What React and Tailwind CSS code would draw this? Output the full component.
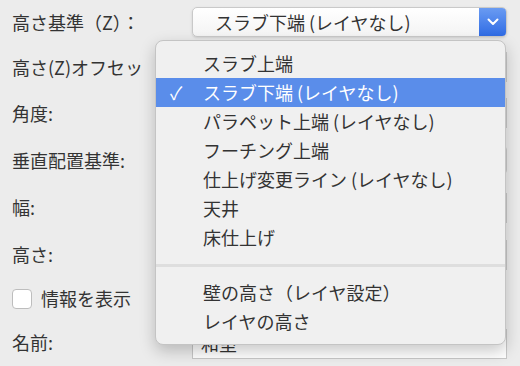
import React from "react";

const font = { fontFamily: '"Noto Sans CJK JP", "Noto Sans", sans-serif' };

const items = [
  "スラブ上端",
  "スラブ下端 (レイヤなし)",
  "パラペット上端 (レイヤなし)",
  "フーチング上端",
  "仕上げ変更ライン (レイヤなし)",
  "天井",
  "床仕上げ",
];

const Field = ({ children, className = "" }) => (
  <div
    className={`h-[30px] w-[315px] border border-[#c8c8c8] bg-white flex items-center px-2 ${className}`}
  >
    {children}
  </div>
);

const Row = ({ h, label, children }) => (
  <div className="flex items-center" style={{ height: h }}>
    <div className="w-[192px] pl-3 text-[18px] text-[#333] whitespace-nowrap overflow-hidden">
      {label}
    </div>
    {children}
  </div>
);

export default function App() {
  return (
    <div
      className="relative w-[520px] h-[366px] overflow-hidden bg-[#ececec] text-[#333]"
      style={font}
    >
      <div className="flex flex-col">
        <Row h={44} label="高さ基準（Z）：">
          <div className="flex h-[30px] w-[315px] rounded-[5px] border border-[#c9c9c9] bg-gradient-to-b from-white to-[#f4f4f4] shadow-sm overflow-hidden">
            <div className="flex-1 flex items-center pl-[22px] text-[18px]">
              スラブ下端 (レイヤなし)
            </div>
            <div className="w-[27px] flex items-center justify-center bg-gradient-to-b from-[#6a9bf2] to-[#2f6be4]">
              <svg width="12" height="8" viewBox="0 0 12 8">
                <path d="M1.5 1.5 L6 6 L10.5 1.5" fill="none" stroke="white" strokeWidth="2" strokeLinecap="round" strokeLinejoin="round" />
              </svg>
            </div>
          </div>
        </Row>
        <Row h={46} label="高さ(Z)オフセッ">
          <Field />
        </Row>
        <Row h={46} label="角度:">
          <Field />
        </Row>
        <Row h={48} label="垂直配置基準:">
          <div className="flex h-[30px] w-[315px] rounded-[5px] border border-[#c9c9c9] bg-white overflow-hidden">
            <div className="flex-1" />
            <div className="w-[27px] bg-[#3b73e6]" />
          </div>
        </Row>
        <Row h={47} label="幅:">
          <Field />
        </Row>
        <Row h={47} label="高さ:">
          <Field />
        </Row>
        <div className="flex items-center h-[41px] pl-3 gap-[9px]">
          <div className="w-[20px] h-[20px] rounded-[4px] border border-[#bdbdbd] bg-white" />
          <span className="text-[18px]">情報を表示</span>
        </div>
        <Row h={47} label="名前:">
          <Field className="text-[18px] mt-[2px]">和室</Field>
        </Row>
      </div>

      <div className="absolute left-[155px] top-[40px] w-[351px] rounded-[8px] bg-[#f0f0f0] border border-[#c4c4c4] shadow-[0_6px_16px_rgba(0,0,0,0.22)] py-2 text-[18px] text-[#333]">
        {items.map((t, i) => (
          <div
            key={t}
            className={`relative h-[29px] flex items-center pl-[47px] ${
              i === 1 ? "bg-[#5a8dea] text-white" : ""
            }`}
          >
            {i === 1 && (
              <span className="absolute left-[14px] text-[18px]">✓</span>
            )}
            {t}
          </div>
        ))}
        <div className="h-[26px] flex items-center">
          <div className="h-[3px] w-full bg-[#dedede]" />
        </div>
        <div className="h-[29px] flex items-center pl-[47px]">壁の高さ（レイヤ設定）</div>
        <div className="h-[29px] flex items-center pl-[47px]">レイヤの高さ</div>
      </div>
    </div>
  );
}
